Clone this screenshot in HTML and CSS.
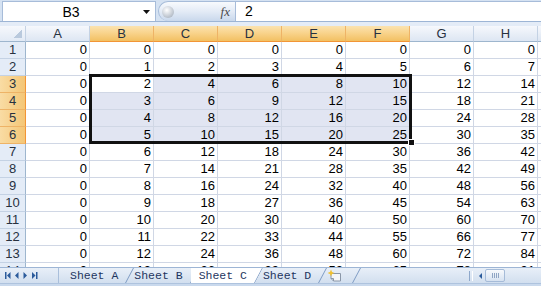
FILE: index.html
```html
<!DOCTYPE html>
<html lang="en">
  <head>
    <meta charset="UTF-8" />
    <title>Sheet C</title>
    <link rel="stylesheet" href="styles.css">
  </head>
  <body>
    <div class="formula-bar">
      <div class="name-box">
        <span class="name">B3</span>
        <svg class="drop" width="7" height="4" viewBox="0 0 7 4"><path d="M0 0h7L3.5 4z" fill="#111"/></svg>
      </div>
      <div class="fx-pill">
        <span class="knob"></span>
        <span class="fx">fx</span>
      </div>
      <div class="formula-input">2</div>
    </div>
    <div class="formula-gap"></div>

    <div class="sheet">
      <div class="grid">
        <div class="hd corner"></div><div class="hd">A</div><div class="hd on">B</div><div class="hd on">C</div><div class="hd on">D</div><div class="hd on">E</div><div class="hd on">F</div><div class="hd">G</div><div class="hd">H</div><div class="hd"></div>

        <div class="rh">1</div><div class="c">0</div><div class="c">0</div><div class="c">0</div><div class="c">0</div><div class="c">0</div><div class="c">0</div><div class="c">0</div><div class="c">0</div><div class="c"></div>
        <div class="rh">2</div><div class="c">0</div><div class="c">1</div><div class="c">2</div><div class="c">3</div><div class="c">4</div><div class="c">5</div><div class="c">6</div><div class="c">7</div><div class="c"></div>
        <div class="rh on">3</div><div class="c">0</div><div class="c">2</div><div class="c sel">4</div><div class="c sel">6</div><div class="c sel">8</div><div class="c sel">10</div><div class="c">12</div><div class="c">14</div><div class="c"></div>
        <div class="rh on">4</div><div class="c">0</div><div class="c sel">3</div><div class="c sel">6</div><div class="c sel">9</div><div class="c sel">12</div><div class="c sel">15</div><div class="c">18</div><div class="c">21</div><div class="c"></div>
        <div class="rh on">5</div><div class="c">0</div><div class="c sel">4</div><div class="c sel">8</div><div class="c sel">12</div><div class="c sel">16</div><div class="c sel">20</div><div class="c">24</div><div class="c">28</div><div class="c"></div>
        <div class="rh on">6</div><div class="c">0</div><div class="c sel">5</div><div class="c sel">10</div><div class="c sel">15</div><div class="c sel">20</div><div class="c sel">25</div><div class="c">30</div><div class="c">35</div><div class="c"></div>
        <div class="rh">7</div><div class="c">0</div><div class="c">6</div><div class="c">12</div><div class="c">18</div><div class="c">24</div><div class="c">30</div><div class="c">36</div><div class="c">42</div><div class="c"></div>
        <div class="rh">8</div><div class="c">0</div><div class="c">7</div><div class="c">14</div><div class="c">21</div><div class="c">28</div><div class="c">35</div><div class="c">42</div><div class="c">49</div><div class="c"></div>
        <div class="rh">9</div><div class="c">0</div><div class="c">8</div><div class="c">16</div><div class="c">24</div><div class="c">32</div><div class="c">40</div><div class="c">48</div><div class="c">56</div><div class="c"></div>
        <div class="rh">10</div><div class="c">0</div><div class="c">9</div><div class="c">18</div><div class="c">27</div><div class="c">36</div><div class="c">45</div><div class="c">54</div><div class="c">63</div><div class="c"></div>
        <div class="rh">11</div><div class="c">0</div><div class="c">10</div><div class="c">20</div><div class="c">30</div><div class="c">40</div><div class="c">50</div><div class="c">60</div><div class="c">70</div><div class="c"></div>
        <div class="rh">12</div><div class="c">0</div><div class="c">11</div><div class="c">22</div><div class="c">33</div><div class="c">44</div><div class="c">55</div><div class="c">66</div><div class="c">77</div><div class="c"></div>
        <div class="rh">13</div><div class="c">0</div><div class="c">12</div><div class="c">24</div><div class="c">36</div><div class="c">48</div><div class="c">60</div><div class="c">72</div><div class="c">84</div><div class="c"></div>
        <div class="rh">14</div><div class="c">0</div><div class="c">13</div><div class="c">26</div><div class="c">39</div><div class="c">52</div><div class="c">65</div><div class="c">78</div><div class="c">91</div><div class="c"></div>
      </div>

      <!-- selection frame over B3:F6 -->
      <div class="selection"></div>
      <div class="fill-handle"></div>
    </div>

    <div class="tabbar">
      <div class="nav">
        <svg width="42" height="15" viewBox="0 0 42 15">
          <g fill="#2b5b9b">
            <rect x="5" y="4" width="1.5" height="7"/>
            <path d="M10.5 4v7L7 7.5z"/>
            <path d="M18.5 4v7L15 7.5z"/>
            <path d="M23.5 4v7L27 7.5z"/>
            <path d="M32 4v7l3.5-3.5z"/>
            <rect x="36" y="4" width="1.5" height="7"/>
          </g>
        </svg>
      </div>
      <div class="tabs">
        <div class="tab">Sheet A</div>
        <div class="tab">Sheet B</div>
        <div class="tab active">Sheet C</div>
        <div class="tab">Sheet D</div>
        <div class="tab add">
          <svg width="16" height="13" viewBox="0 0 16 13">
            <path d="M4 4.5h9.5v7.5H6.5L4 9.5z" fill="#f4f6f9" stroke="#8a97a8"/>
            <path d="M4 9.5h2.5V12" fill="none" stroke="#8a97a8"/>
            <path d="M4 0.5l1 2.5 2.5 1-2.5 1-1 2.5-1-2.5-2.5-1 2.5-1z" fill="#f2c12e"/>
          </svg>
        </div>
      </div>
      <div class="hscroll">
        <span class="split"></span>
        <svg class="arrow" width="10" height="14" viewBox="0 0 10 14"><path d="M7 4v6L4 7z" fill="#2b5b9b"/></svg>
        <span class="thumb"></span>
      </div>
    </div>
    <div class="status-strip"></div>
  </body>
</html>
```

FILE: styles.css
```css
body {
  margin: 0;
  width: 541px;
  height: 287px;
  overflow: hidden;
  font-family: 'Liberation Sans', Arial, sans-serif;
  background: #fff;
  color: #000;
}

/* Formula bar */
.formula-bar {
  display: flex;
  height: 22px;
  padding: 1px 0 0 2px;
  box-sizing: border-box;
  background: #d5e2f2;
  border-bottom: 1px solid #9db5d5;
}

.formula-gap {
  height: 4px;
  background: #e4ecf7;
}

.name-box {
  width: 154px;
  box-sizing: border-box;
  display: flex;
  align-items: center;
  background: #fff;
  border: 1px solid #a7bcd9;
  border-bottom: none;
  font-size: 14px;
}

.name {
  flex: 1;
  text-align: center;
  padding-right: 4px;
}

.drop {
  margin-right: 5px;
}

.fx-pill {
  width: 77px;
  box-sizing: border-box;
  margin-left: 2px;
  display: flex;
  align-items: center;
  justify-content: space-between;
  padding: 0 5px 0 3px;
  border: 1px solid #a7bcd9;
  border-right: none;
  border-bottom: none;
  border-radius: 10px 0 0 10px;
  background: linear-gradient(#f8fafd, #e3ebf6 50%, #c9d8ec);
}

.knob {
  width: 12px;
  height: 12px;
  border-radius: 50%;
  background: radial-gradient(circle at 40% 35%, #fff, #c2c9d2 60%, #9ba6b3);
}

.fx {
  font-family: 'Liberation Serif', serif;
  font-style: italic;
  font-size: 13px;
  color: #4a4a4a;
}

.formula-input {
  flex: 1;
  padding-left: 9px;
  background: #fff;
  border: 1px solid #a7bcd9;
  border-right: none;
  border-bottom: none;
  font-size: 14px;
  line-height: 19px;
}

/* Sheet grid */
.sheet {
  position: relative;
  height: 241px;
  overflow: hidden;
}

.grid {
  display: grid;
  grid-template-columns: 26px repeat(9, 64px);
  grid-template-rows: 16px;
  grid-auto-rows: 17px;
  font-size: 13px;
}

.grid > div {
  box-sizing: border-box;
  border-right: 1px solid #d0d7e5;
  border-bottom: 1px solid #d0d7e5;
  line-height: 16px;
  white-space: nowrap;
  overflow: hidden;
}

.c {
  text-align: right;
  padding-right: 2px;
}

.sel {
  background: #e1e5f2;
}

.grid > .hd {
  text-align: center;
  line-height: 15px;
  color: #27313f;
  background: linear-gradient(#f6f8fc, #e8eef7 55%, #dde6f3);
  border-right-color: #c4d2e4;
  border-bottom-color: #9eb6ce;
}

.grid > .rh {
  text-align: center;
  color: #27313f;
  background: #e4ecf7;
  border-right-color: #9eb6ce;
  border-bottom-color: #c4d2e4;
}

.grid > .hd.on {
  background: linear-gradient(#fbe3b0, #f8d289 50%, #f2c062);
  border-right-color: #eeb366;
  border-bottom-color: #f29536;
}

.grid > .rh.on {
  background: linear-gradient(to right, #f9dca4, #f4c676);
  border-right-color: #f29536;
  border-bottom-color: #eeb366;
}

.grid > .corner {
  background:
    linear-gradient(135deg, transparent 50%, #b9c9dd 50%) no-repeat right 3px bottom 3px / 8px 8px,
    linear-gradient(#f6f8fc, #e2eaf5);
}

.selection {
  position: absolute;
  left: 89px;
  top: 48px;
  width: 323px;
  height: 70px;
  box-sizing: border-box;
  border: 3px solid #111;
}

.fill-handle {
  position: absolute;
  left: 408px;
  top: 113px;
  width: 7px;
  height: 7px;
  box-sizing: border-box;
  background: #111;
  border: 1px solid #fff;
}

/* Sheet tabs */
.tabbar {
  display: flex;
  height: 16px;
  box-sizing: border-box;
  border-top: 1px solid #9db5d5;
  background: linear-gradient(#e8eff8, #d2dfef);
  overflow: hidden;
}

.nav {
  width: 58px;
  display: flex;
  align-items: center;
  border-right: 1px solid #a9bfdb;
}

.tabs {
  display: flex;
  margin-left: 3px;
}

.tab {
  position: relative;
  padding: 1px 16px 0 8px;
  margin-right: -8px;
  font-family: 'Liberation Mono', monospace;
  font-size: 11.5px;
  line-height: 14px;
  color: #1e3560;
}

.tab::after {
  content: '';
  position: absolute;
  top: 0;
  bottom: 0;
  right: 4px;
  border-right: 1px solid #7f9cc4;
  transform: skewX(-28deg);
}

.tab.active {
  background: #fff;
  clip-path: polygon(0 0, 100% 0, calc(100% - 8px) 100%, 0 100%);
}

.tab.add {
  padding: 0 18px 0 8px;
  display: flex;
  align-items: center;
}

.hscroll {
  margin-left: auto;
  width: 72px;
  display: flex;
  align-items: center;
}

.split {
  width: 2px;
  height: 10px;
  margin-right: 2px;
  border-left: 1px solid #8ea8cb;
  border-right: 1px solid #fff;
}

.thumb {
  width: 18px;
  height: 11px;
  border: 1px solid #a5bbd8;
  border-radius: 2px;
  background:
    repeating-linear-gradient(to right, #8fa5c4 0 1px, transparent 1px 2px) no-repeat center / 7px 5px,
    linear-gradient(#f7f9fc, #d6e2f1);
}

.status-strip {
  height: 3px;
  box-sizing: border-box;
  border-top: 1px solid #aec3de;
  background: #c9d9ed;
}
```
